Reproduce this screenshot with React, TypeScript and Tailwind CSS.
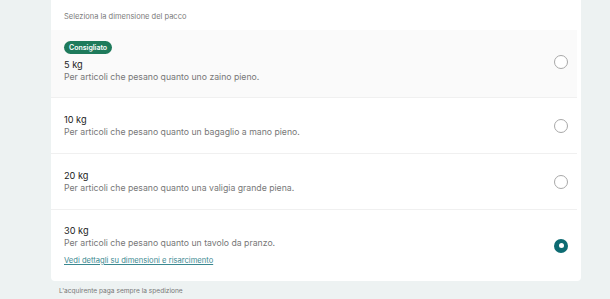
const sizes = [
  { kg: "5 kg", desc: "Per articoli che pesano quanto uno zaino pieno.", recommended: true },
  { kg: "10 kg", desc: "Per articoli che pesano quanto un bagaglio a mano pieno." },
  { kg: "20 kg", desc: "Per articoli che pesano quanto una valigia grande piena." },
  { kg: "30 kg", desc: "Per articoli che pesano quanto un tavolo da pranzo.", selected: true, link: true },
];

const Radio = ({ checked }: { checked?: boolean }) =>
  checked ? (
    <span className="flex h-[14px] w-[14px] items-center justify-center rounded-full bg-[#0d6b72]">
      <span className="h-[5px] w-[5px] rounded-full bg-white" />
    </span>
  ) : (
    <span className="h-[14px] w-[14px] rounded-full border border-[#a8a8a8] bg-white" />
  );

export default function App() {
  return (
    <div className="h-[299px] w-[610px] overflow-hidden bg-[#edf2f2] font-['Inter',sans-serif]">
      <div className="ml-[51px] w-[530px] rounded-b-[4px] bg-white pb-[1px] pr-[4px]">
        <div className="h-[30px] pl-[13px] pt-[12px] text-[7.5px] leading-[10px] text-[#7a7a7a]">
          Seleziona la dimensione del pacco
        </div>
        {sizes.map((s, i) => (
          <div
            key={s.kg}
            className={
              "flex items-center justify-between border-[#f0f0f0] pl-[13px] pr-[9px] " +
              (i > 0 ? "border-t " : "") +
              (s.recommended ? "h-[67px] bg-[#fafafa] pb-[4px]" : s.link ? "h-[71px] pt-[1px]" : "h-[56px] pt-[1px]")
            }
          >
            <div className="flex flex-col">
              {s.recommended && (
                <span className="mb-[5px] w-fit rounded-full bg-[#1e7a5b] px-[5px] py-[2px] text-[7px] font-semibold leading-[9px] text-white">
                  Consigliato
                </span>
              )}
              <span className="text-[9.2px] leading-[12px] text-[#222]">{s.kg}</span>
              <span className="text-[8.7px] leading-[12px] text-[#777]">{s.desc}</span>
              {s.link && (
                <a className="mt-[7px] text-[7.6px] leading-[10px] text-[#3b8890] underline">
                  Vedi dettagli su dimensioni e risarcimento
                </a>
              )}
            </div>
            <Radio checked={s.selected} />
          </div>
        ))}
      </div>
      <div className="pl-[59px] pt-[5px] text-[6.6px] leading-[10px] text-[#777]">
        L'acquirente paga sempre la spedizione
      </div>
    </div>
  );
}
